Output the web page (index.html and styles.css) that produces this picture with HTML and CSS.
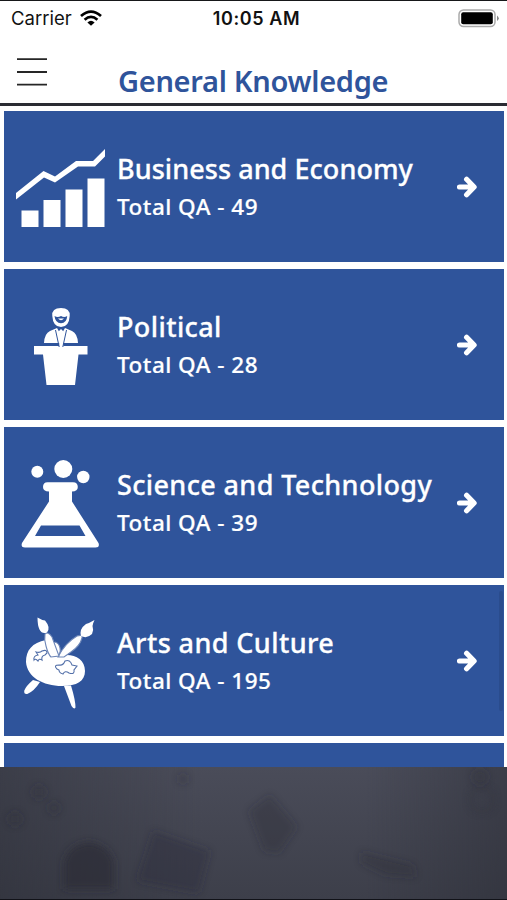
FILE: index.html
```html
<!DOCTYPE html>
<html lang="en">
<head>
<meta charset="utf-8">
<title>General Knowledge</title>
<link rel="stylesheet" href="styles.css">
</head>
<body>
<main class="screen">
  <div class="status">
    <div class="carrier"><span>Carrier</span>
      <svg width="22" height="16" viewBox="0 0 22 16"><g fill="none" stroke="#000" stroke-width="2.7"><path d="M1 6.1Q11-2.9 21 6.1"/><path d="M4.6 9.7Q11 4 17.4 9.7"/></g><path d="M7.4 12.4Q11 9.3 14.6 12.4L11 15.8Z"/></svg>
    </div>
    <time class="clock">10:05 AM</time>
    <svg class="battery" width="42" height="19" viewBox="0 0 42 19"><rect x="1" y="1" width="36" height="16.5" rx="4.5" fill="#fff" stroke="#aaa" stroke-width="1.5"/><rect x="3.2" y="3.2" width="31.6" height="12" rx="2"/><path d="M39 6.5q3.5 2.8 0 5.6z" fill="#888"/></svg>
  </div>
  <header class="header">
    <svg class="menu" width="30" height="29" viewBox="0 0 30 29"><path d="M0 1.200h30M0 14h30M0 26.700h30" stroke="#262626" stroke-width="1.8"/></svg>
    <h1>General Knowledge</h1>
  </header>
  <div class="list">
    <section class="card">
      <svg class="icon" width="112" height="148" viewBox="4 113 112 148"><path d="M16 193 43.500 171 55 176.500 76 161H93L105 149v7.500L95 166.500H78L55 182.500 44 177.500 16 199.500ZM21.500 210.500H38.500V227H21.500ZM43.500 200H60.500V227H43.500ZM65.500 189.500H82.500V227H65.500ZM87.500 178.500H104.500V227H87.500Z"/></svg>
      <div class="copy"><h2 class="business">Business and Economy</h2><p>Total QA - 49</p></div>
      <svg class="arrow" width="20" height="22" viewBox="0 0 20 22"><path d="M2.500 11h13M9.600 3.300l7.500 7.700-7.500 7.700"/></svg>
    </section>
    <section class="card">
      <svg class="icon" width="112" height="148" viewBox="4 271 112 148"><path d="M52.300 316q-.8-8 8.700-8 9.300 0 8.700 8Q69 327 61 327t-8.700-11Z"/><path class="ink" d="M54.500 316q3.200 2.200 6.500 0 3.300 2.200 6.200 0-.5 7.200-6.200 7.200t-6.500-7.200Z"/><path d="M58 318.500h6q-3 3.500-6 0Z"/><path d="M44 343q.5-9.500 6-12l7-3 4 7 4-7 7 3q5.500 2.500 6 12ZM34 346H87.500v8.500H78.500L75 385H46.500L43 354.500H34Z"/><path d="M58.500 331.500 61 329l2.500 2.500-1.200 3 1.200 12h-4.500l.9-12Z"/><path class="fine" d="M55.500 330l3.700 17M66.500 330l-3.700 17"/></svg>
      <div class="copy"><h2>Political</h2><p>Total QA - 28</p></div>
      <svg class="arrow" width="20" height="22" viewBox="0 0 20 22"><path d="M2.500 11h13M9.600 3.300l7.500 7.700-7.500 7.700"/></svg>
    </section>
    <section class="card">
      <svg class="icon" width="112" height="148" viewBox="4 429 112 148"><circle cx="37.300" cy="471.700" r="6"/><circle cx="63.300" cy="469" r="9"/><circle cx="83.300" cy="477" r="6.200"/><path fill-rule="evenodd" d="M47.500 482.300H73q4.800 0 4.800 4.700 0 4.300-5.800 4.500v10L98.500 543q1.500 4.500-3 4.500H25q-4.500 0-3-4.500L49 501.500v-10q-6-.2-6-4.500 0-4.700 4.500-4.700ZM41 525.500 35 536H85.500L79.500 525.500Z"/></svg>
      <div class="copy"><h2 class="science">Science and Technology</h2><p>Total QA - 39</p></div>
      <svg class="arrow" width="20" height="22" viewBox="0 0 20 22"><path d="M2.500 11h13M9.600 3.300l7.500 7.700-7.500 7.700"/></svg>
    </section>
    <section class="card">
      <svg class="icon" width="112" height="148" viewBox="4 587 112 148"><path d="M33 680q-7 6-8.700 10.500-.7 4 3 3.500 7-3 12.700-12ZM64 686l7.500 20q2.500 4 4 1.500 0-7-4.500-22Z"/><path d="M46 640C32 643 26 650 26 662c1 15 17 24 36 24 15 0 23-5 23-15 0-12-10-17-21-16l-5 1q2-6-1-10-5-7-12-6Z"/><path class="outline" d="M53 656q9 0 7-8-1-5-5-6"/><path class="outline" d="M58 657Q65 643 77 636q6-2 5 2-2 8-11 14l-7 5Z"/><path class="outline" d="M45 634q3-3 7 3l7 19-8 1q-3-3-5-11-2-6-1-12Z"/><path d="M37.500 617.500q4 2.500 7.500 3 6 7 2 12-5 2-7.500-3-2-4-2-12ZM94.500 620q-5 3-8.500 4-7 5-5 12 6 3 11-2 2-4 .5-8 .5-3 2-6Z"/><path class="outline ink-line" d="M34 660q-1-4 4-5l-2-3q4 1 6-1 5-2 5 2l-2 2q-4 1-3 5-3-2-4 1-3-3-4-1ZM57 669q-4-4 2-4 4 1 6-4 5-2 7 4l5 1-3 4q1 5-5 3-4-3-6 1-4-1-4-4Z"/></svg>
      <div class="copy"><h2>Arts and Culture</h2><p>Total QA - 195</p></div>
      <svg class="arrow" width="20" height="22" viewBox="0 0 20 22"><path d="M2.500 11h13M9.600 3.300l7.500 7.700-7.500 7.700"/></svg>
      <span class="scrollbar"></span>
    </section>
    <section class="card"></section>
  </div>
  <footer class="footer">
    <svg width="507" height="132" viewBox="0 766 507 132">
      <defs><filter id="soft" x="-30%" y="-30%" width="160%" height="160%"><feGaussianBlur stdDeviation="3.500"/></filter></defs>
      <g filter="url(#soft)" fill="#2c2d38"><path opacity=".65" d="M64 888V861q4-17 25-20 20 3 25 20v27Z"/><path opacity=".36" d="m153 830 57 20-11 42-62-12Z"/><path opacity=".33" d="m270 794 27 32-18 26-15-2-15-40Z"/><path opacity=".33" d="m361 851 52 13 3 12-30-2-25-12Z"/><g opacity=".3"><circle cx="39" cy="791" r="7"/><circle cx="54" cy="807" r="6"/><circle cx="15" cy="818" r="7"/><circle cx="183" cy="778" r="5"/><circle cx="480" cy="776" r="8"/></g></g>
      <circle cx="482" cy="799" r="12" fill="none" stroke="#30323d" stroke-width="4" opacity=".3" filter="url(#soft)"/>
    </svg>
  </footer>
</main>
</body>
</html>
```
FILE: styles.css
```css
* { box-sizing: border-box; }
body { margin: 0; background: #fff; font-family: "Noto Sans", sans-serif; }
h1, h2, p { margin: 0; white-space: nowrap; }
svg { display: block; flex-shrink: 0; }
.screen { width: 507px; height: 900px; overflow: hidden; display: flex; flex-direction: column; border-top: 1.5px solid #161719; }
.status { height: 35px; flex-shrink: 0; display: grid; grid-template-columns: 1fr auto 1fr; align-items: center; padding: 0 7px 1px 11px; font-family: Inter, sans-serif; font-size: 18.500px; color: #111; }
.carrier { display: flex; align-items: center; gap: 8px; }
.clock { font-weight: 600; font-size: 18px; letter-spacing: .6px; margin-left: 2px; }
.battery { justify-self: end; }
.header { height: 69.500px; flex-shrink: 0; display: grid; grid-template-columns: 101px 1fr; align-items: start; padding: 22px 0 0 17px; border-bottom: 3px solid #2a2c33; }
h1 { margin-top: 3px; color: #2f549b; font-size: 29px; line-height: 40px; font-weight: 600; letter-spacing: -.3px; }
.list { flex: 0 0 661px; overflow: hidden; display: flex; flex-direction: column; gap: 7.500px; padding: 5.500px 3.500px 0 4px; background: #fff; }
.card { position: relative; flex: 0 0 150.500px; min-height: 0; display: flex; align-items: center; padding-top: 2px; background: #2f549b; color: #fff; }
.icon { fill: #fff; }
.ink { fill: #2f549b; }
.fine { fill: none; stroke: #2f549b; stroke-width: 1; }
.outline { fill: #fff; stroke: #6e87b8; stroke-width: 1.1; }
.ink-line { stroke: #5370a9; }
.copy { flex: 1; padding-left: 1px; }
h2 { font-size: 27px; line-height: 40px; font-weight: 500; letter-spacing: .4px; -webkit-text-stroke: .3px currentColor; }
.business { letter-spacing: .05px; }
.science { letter-spacing: .37px; }
p { font-size: 22.500px; line-height: 36px; font-weight: 500; letter-spacing: .48px; -webkit-text-stroke: .2px currentColor; }
.arrow { margin-right: 27px; fill: none; stroke: #fff; stroke-width: 5.200; stroke-linecap: round; stroke-linejoin: round; }
.scrollbar { position: absolute; right: 1px; top: 6px; width: 4px; height: 120px; border-radius: 2px; background: #2a4c8d; }
.footer { flex: 1; min-height: 0; background: linear-gradient(90deg, #292b3470, transparent 40%, transparent 72%, #292b3470), linear-gradient(#4a4c59, #3d3f4a); border-bottom: 1.500px solid #111218; }
```
